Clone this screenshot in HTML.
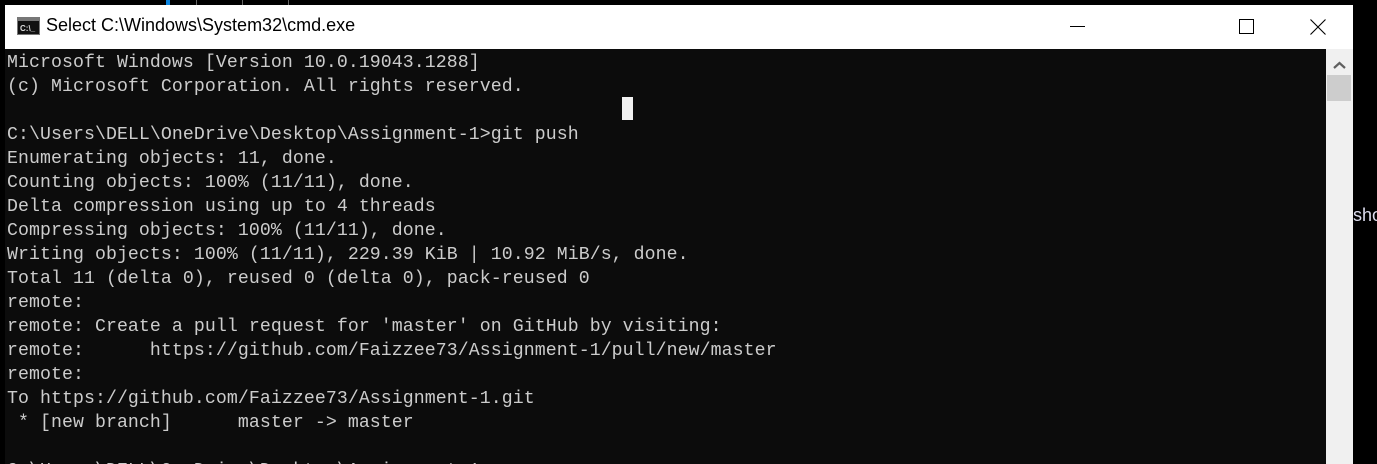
<!DOCTYPE html>
<html><head><meta charset="utf-8"><style>
html,body{margin:0;padding:0;background:#000;width:1377px;height:464px;overflow:hidden;position:relative}
.t{position:absolute;top:0;height:5px;width:1px;background:#666}
#win{position:absolute;left:5px;top:5px;width:1348px;height:470px;background:#0c0c0c}
#tb{position:absolute;left:0;top:0;width:1348px;height:44px;background:#fff}
#title{position:absolute;left:41px;top:10px;font:18px "Liberation Sans",sans-serif;color:#000}
#con{position:absolute;left:2px;top:46px;font:18.2px/24px "Liberation Mono",monospace;color:#cccccc;white-space:pre;margin:0;letter-spacing:0.08px}
#sb{position:absolute;left:1321px;top:44px;width:27px;height:430px;background:#f0f0f0}
#thumb{position:absolute;left:1px;top:26px;width:24px;height:26px;background:#cdcdcd}
</style></head><body>
<div class="t" style="left:196px"></div><div class="t" style="left:242px"></div><div class="t" style="left:288px"></div>
<div style="position:absolute;left:166px;top:0;width:4px;height:5px;background:#0a84e0"></div>
<div id="win">
<div id="tb">
<svg style="position:absolute;left:12px;top:12px" width="23" height="18" viewBox="0 0 23 18"><rect x="0" y="0" width="23" height="18" fill="#777"/><rect x="1" y="4" width="21" height="13" fill="#111"/><text x="3" y="14" font-family="Liberation Sans" font-size="8" font-weight="bold" fill="#ddd">C:\_</text></svg>
<div id="title">Select C:\Windows\System32\cmd.exe</div>
<div style="position:absolute;left:1065px;top:21px;width:15px;height:1px;background:#000"></div>
<div style="position:absolute;left:1234px;top:14px;width:13px;height:13px;border:1px solid #000"></div>
<svg style="position:absolute;left:1305px;top:14px" width="16" height="16"><path d="M0.5 0.5L15.5 15.5M15.5 0.5L0.5 15.5" stroke="#000" stroke-width="1.1"/></svg>
</div>
<pre id="con">Microsoft Windows [Version 10.0.19043.1288]
(c) Microsoft Corporation. All rights reserved.

C:\Users\DELL\OneDrive\Desktop\Assignment-1&gt;git push
Enumerating objects: 11, done.
Counting objects: 100% (11/11), done.
Delta compression using up to 4 threads
Compressing objects: 100% (11/11), done.
Writing objects: 100% (11/11), 229.39 KiB | 10.92 MiB/s, done.
Total 11 (delta 0), reused 0 (delta 0), pack-reused 0
remote:
remote: Create a pull request for 'master' on GitHub by visiting:
remote:      https://github.com/Faizzee73/Assignment-1/pull/new/master
remote:
To https://github.com/Faizzee73/Assignment-1.git
 * [new branch]      master -&gt; master

C:\Users\DELL\OneDrive\Desktop\Assignment-1&gt;</pre>
<div style="position:absolute;left:617px;top:92px;width:11px;height:23px;background:#f2f2f2"></div>
<div id="sb">
<svg style="position:absolute;left:7px;top:12px" width="13" height="9"><path d="M1 7L6.5 2L12 7" stroke="#606060" stroke-width="2.2" fill="none"/></svg>
<div id="thumb"></div>
</div>
</div>
<div style="position:absolute;left:1353px;top:205px;font:18px 'Liberation Sans',sans-serif;color:#dde">sho</div>
</body></html>
